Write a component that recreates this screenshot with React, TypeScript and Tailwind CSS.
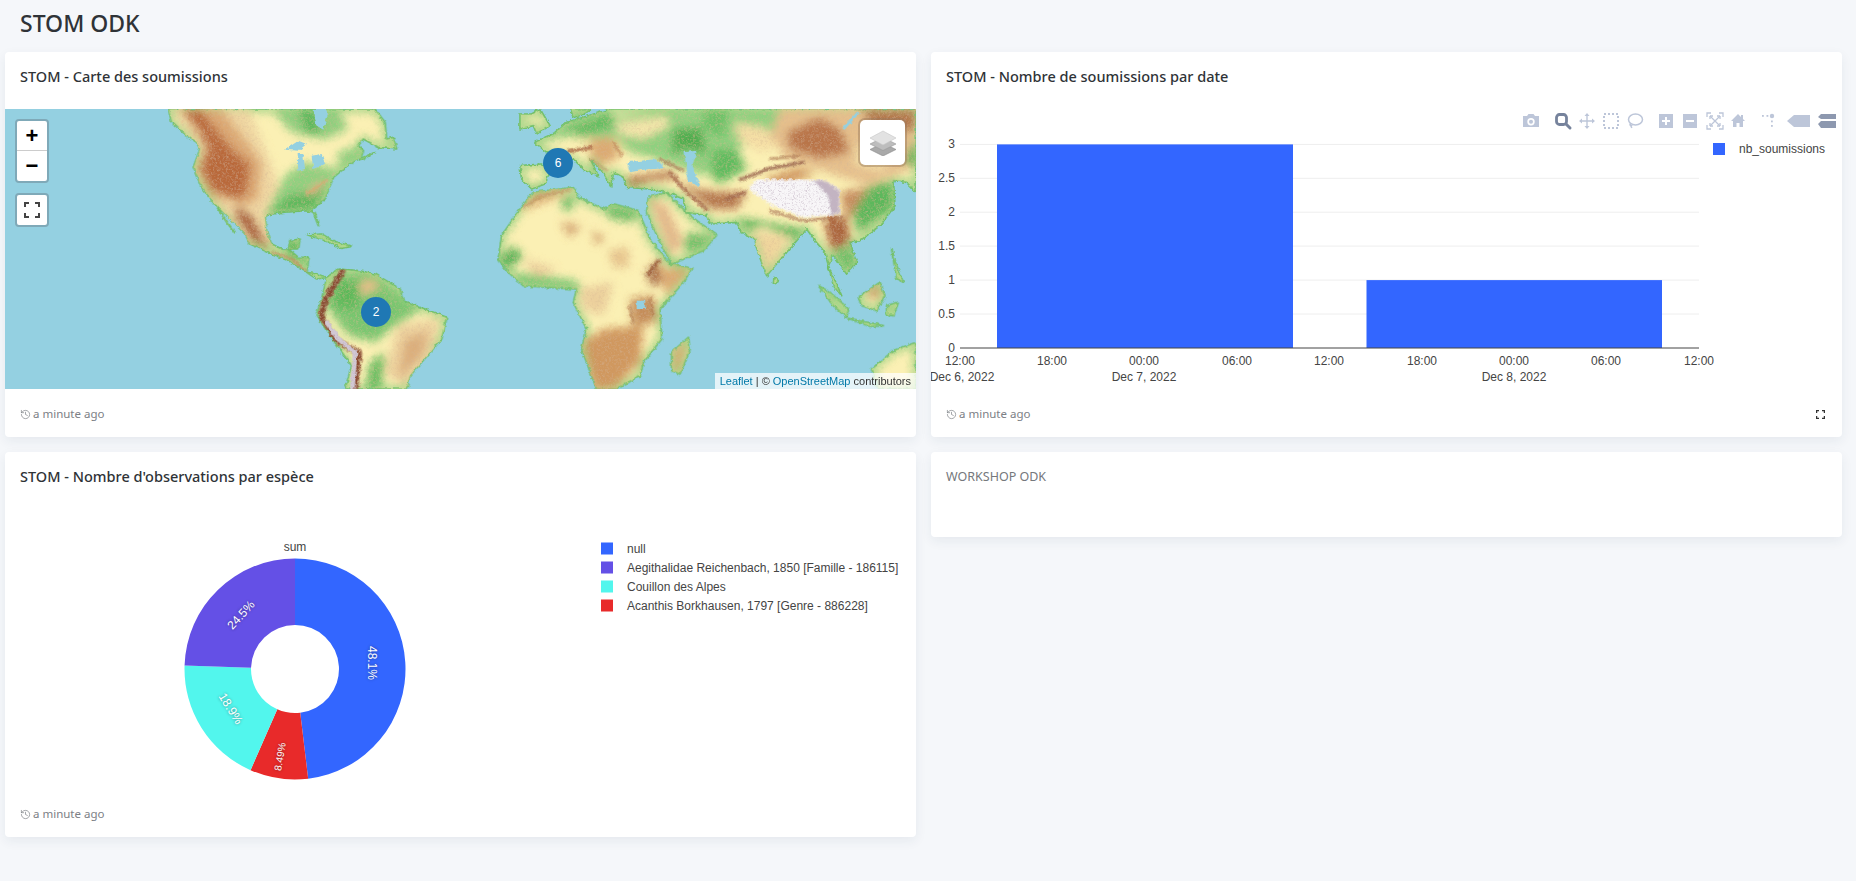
import { History } from "lucide-react"

const titleFont = "font-['Noto_Sans',sans-serif]"
const chartFont = "font-['Liberation_Sans',Arial,sans-serif]"

// land outlines, traced at 3x the map size. "e" = eastern half, shifted right
const land = [
  { d: "M490,0 L500,40 L545,80 L575,100 L585,120 L565,175 L590,235 L610,262 L640,300 L690,372 L665,340 L630,285 L720,375 L735,405 L800,435 L850,455 L905,490 L935,510 L965,505 L935,495 L905,490 L912,445 L880,445 L850,420 L855,395 L885,390 L880,420 L830,420 L800,405 L785,370 L780,320 L830,310 L900,305 L930,310 L940,350 L920,300 L960,270 L985,205 L1040,160 L1110,130 L1065,155 L1075,125 L1060,110 L1075,90 L1120,115 L1175,120 L1165,85 L1145,90 L1140,40 L1110,0 Z" },
  { d: "M965,505 L1000,480 L1060,485 L1110,495 L1185,540 L1195,575 L1260,600 L1325,625 L1310,690 L1275,730 L1215,800 L1205,840 L1020,840 L1040,770 L1000,715 L955,650 L935,615 L950,570 Z" },
  { d: "M905,378 L950,375 L990,398 L1040,412 L1010,418 L960,395 Z" },
  { e: true, d: "M150,300 L190,250 L310,235 L325,265 L400,300 L430,285 L505,305 L540,390 L600,465 L665,478 L640,520 L570,600 L575,690 L520,760 L510,800 L440,840 L380,840 L335,720 L350,660 L310,580 L320,540 L160,530 L115,490 L85,450 L95,380 Z" },
  { e: true, d: "M655,685 L660,720 L630,795 L605,785 L605,730 Z" },
  { e: true, d: "M535,265 L590,250 L660,320 L740,378 L700,425 L605,465 L570,400 L530,310 Z" },
  { e: true, d: "M150,170 L215,165 L240,190 L225,225 L185,240 L155,210 Z" },
  { e: true, d: "M195,100 L250,75 L290,40 L340,25 L420,0 L1338,0 L1338,250 L1310,220 L1270,215 L1275,290 L1230,350 L1170,395 L1140,400 L1160,460 L1130,495 L1090,440 L1075,470 L1115,560 L1090,530 L1065,430 L1035,395 L1010,360 L980,395 L915,470 L890,500 L860,420 L855,390 L815,370 L800,340 L720,345 L710,320 L650,310 L640,270 L590,250 L540,240 L470,235 L460,205 L430,190 L425,235 L400,190 L360,150 L385,200 L345,185 L310,150 L230,130 Z" },
  { e: true, d: "M150,15 L185,15 L210,0 L240,50 L200,75 L190,50 L150,60 Z" },
  { e: true, d: "M300,0 L310,25 L345,15 L360,0 Z" },
  { e: true, d: "M912,505 L925,515 L920,525 L910,520 Z" },
  { e: true, d: "M1045,530 L1080,550 L1135,600 L1130,625 L1090,590 Z" },
  { e: true, d: "M1165,565 L1230,520 L1245,560 L1220,605 L1175,590 Z" },
  { e: true, d: "M1135,628 L1240,650 L1200,652 Z" },
  { e: true, d: "M1250,590 L1285,580 L1270,620 L1250,615 Z" },
  { e: true, d: "M1265,420 L1280,470 L1300,520 L1280,510 Z" },
  { e: true, d: "M1338,700 L1270,725 L1205,780 L1225,840 L1338,840 Z" },
]

// elevation colour patches, blurred and clipped to the land
const westPatches: [string, string][] = [
  ["#8fcf7e", "M800,0 L1000,0 L1030,60 L960,90 L860,70 Z"],
  ["#5cb85c", "M880,0 L930,0 L950,70 L905,78 Z"],
  ["#8fd07f", "M780,320 L840,200 L900,160 L1000,180 L960,275 L900,305 Z"],
  ["#5cb85c", "M780,325 L850,260 L965,235 L930,300 L830,310 Z"],
  ["#8fd07f", "M1000,130 L1060,110 L1060,150 L1000,190 Z"],
  ["#f0d7a2", "M500,0 L730,0 L800,170 L820,240 L780,310 L800,400 L730,400 L640,290 L570,190 L585,120 Z"],
  ["#dca873", "M520,0 L650,0 L720,90 L770,160 L760,270 L720,290 L620,260 L575,180 L600,120 L570,60 Z"],
  ["#b9693b", "M530,0 L585,0 L640,70 L690,130 L735,165 L725,250 L700,270 L620,245 L585,180 L610,120 L580,60 Z"],
  ["#a85a34", "M695,290 L740,320 L795,420 L740,395 L690,320 Z"],
  ["#e3b98a", "M890,260 L960,205 L940,250 Z"],
  ["#6abd62", "M830,395 L885,390 L910,470 L850,445 Z"],
  ["#79c670", "M990,495 L1100,495 L1190,560 L1250,600 L1170,650 L1110,700 L1030,680 L960,590 Z"],
  ["#5db95a", "M1000,510 L1060,520 L1060,600 L980,590 Z"],
  ["#eac08a", "M1060,520 L1110,510 L1120,540 L1070,560 Z"],
  ["#ecd09c", "M1180,650 L1300,630 L1280,730 L1200,830 L1140,790 Z"],
  ["#dcae7c", "M1200,690 L1270,670 L1250,740 L1180,810 Z"],
  ["#68bd60", "M1095,760 L1140,730 L1130,840 L1080,840 Z"],
]

const eastPatches: [string, string][] = [
  ["#8fd07f", "M230,95 L300,45 L620,0 L930,0 L960,60 L800,120 L700,200 L560,150 L400,110 L300,80 Z"],
  ["#5fbc5f", "M280,60 L420,10 L440,50 L340,80 Z"],
  ["#f4e6aa", "M430,45 L590,20 L600,50 L520,90 L450,75 Z"],
  ["#e9e29f", "M300,85 L440,85 L480,130 L360,110 Z"],
  ["#4fae50", "M610,60 L695,55 L710,135 L640,120 L605,140 Z"],
  ["#6cc268", "M700,0 L780,0 L760,90 L700,60 Z"],
  ["#f5dfa5", "M790,40 L880,55 L940,100 L880,130 L810,100 Z"],
  ["#5fbc5f", "M730,120 L800,120 L830,180 L750,225 L720,200 Z"],
  ["#e6c08c", "M930,0 L1338,0 L1338,170 L1200,230 L1100,200 L950,150 L900,80 Z"],
  ["#b9744a", "M950,70 L1050,25 L1110,60 L1140,130 L1050,150 L960,120 Z"],
  ["#b5784d", "M1170,0 L1338,0 L1338,60 L1230,85 Z"],
  ["#f1dba3", "M1160,100 L1280,130 L1240,190 L1150,170 Z"],
  ["#d29a62", "M880,210 L980,175 L1040,190 L930,240 Z"],
  ["#b5774e", "M470,205 L600,185 L650,240 L720,300 L800,300 L830,250 L760,250 L680,240 L620,210 L540,215 L480,235 Z"],
  ["#c78d5e", "M1110,250 L1220,230 L1180,300 L1130,330 Z"],
  ["#5cb85c", "M1200,230 L1262,215 L1272,290 L1200,350 L1160,375 L1150,310 Z"],
  ["#a9623b", "M1060,335 L1130,320 L1140,400 L1085,425 Z"],
  ["#59b558", "M805,325 L1000,360 L975,390 L880,350 L830,365 Z"],
  ["#f0d59c", "M850,365 L960,385 L890,490 Z"],
  ["#6fc068", "M1090,420 L1150,410 L1160,460 L1130,495 Z"],
  ["#dcaa72", "M360,90 L430,85 L450,140 L400,170 L360,140 Z"],
  ["#e3b98a", "M535,265 L590,290 L640,400 L605,440 L560,330 Z"],
  ["#6fc068", "M650,370 L730,380 L690,420 L640,430 Z"],
  ["#dba970", "M150,300 L200,255 L310,240 L260,265 L170,300 Z"],
  ["#6fc068", "M275,262 L315,265 L305,305 L275,300 Z"],
  ["#d6a672", "M270,340 L335,350 L300,385 Z"],
  ["#d6a672", "M365,365 L405,385 L380,410 Z"],
  ["#e8c68e", "M415,425 L475,415 L475,475 L430,475 Z"],
  ["#ecd09c", "M160,450 L260,480 L200,510 Z"],
  ["#ecd09c", "M330,540 L430,520 L400,620 L340,600 Z"],
  ["#57b356", "M85,450 L130,410 L160,440 L120,480 Z"],
  ["#7cc873", "M130,490 L320,515 L330,540 L160,530 Z"],
  ["#6fc068", "M400,290 L505,305 L490,340 L420,330 Z"],
  ["#a0603c", "M530,490 L570,450 L575,520 L545,530 Z"],
  ["#dba970", "M560,480 L660,480 L590,560 Z"],
  ["#c48c58", "M480,570 L550,560 L560,640 L490,650 Z"],
  ["#d0985f", "M340,700 L400,660 L520,650 L510,760 L430,840 L370,840 Z"],
  ["#62b95e", "M520,770 L575,690 L540,740 L510,800 Z"],
  ["#d9a76e", "M615,720 L650,700 L625,790 L610,780 Z"],
  ["#4fae50", "M1338,90 L1300,160 L1338,170 Z"],
  ["#cf9c68", "M1190,540 L1240,530 L1210,580 Z"],
]

// thin ridge lines, drawn with much less blur
const westRidges: [string, number, string][] = [
  ["M1012,488 L962,570 L948,620 L990,692 L1062,732 L1050,840", 18, "#8a4a32"],
  ["M805,430 L860,450 L905,490", 7, "#c08a5c"],
  ["M905,255 L965,215", 7, "#dba970"],
]

const eastRidges: [string, number, string][] = [
  ["M810,212 L900,178 L1000,160", 9, "#99634c"],
  ["M900,150 L990,140", 5, "#a36a48"],
  ["M600,190 L640,240 L710,300", 9, "#a5684a"],
  ["M570,150 L640,185", 6, "#a5684a"],
  ["M295,128 L365,115", 9, "#a86440"],
  ["M430,100 L455,140", 5, "#b9744a"],
  ["M360,148 L410,185", 4, "#c08a5c"],
  ["M770,270 L825,250", 9, "#a0644a"],
  ["M900,305 L1000,335 L1115,325", 6, "#a0644a"],
  ["M1085,325 L1105,395", 18, "#ae6a42"],
  ["M160,295 L210,262 L300,242", 5, "#c08a5c"],
  ["M535,495 L565,455", 10, "#9c5e3c"],
  ["M480,590 L490,640", 5, "#a86c44"],
  ["M540,570 L550,620", 5, "#a86c44"],
]

function MapArt() {
  return (
    <svg viewBox="0 0 2733 840" className="block h-full w-full" aria-hidden="true">
      <defs>
        <filter id="rough" x="0" y="0" width="100%" height="100%">
          <feTurbulence type="fractalNoise" baseFrequency="0.08" numOctaves="5" seed="7" />
          <feDisplacementMap in="SourceGraphic" scale="12" xChannelSelector="R" yChannelSelector="G" />
        </filter>
        <filter id="soft" x="-20%" y="-20%" width="140%" height="140%">
          <feGaussianBlur stdDeviation="13" />
        </filter>
        <filter id="ridge" x="-30%" y="-30%" width="160%" height="160%">
          <feGaussianBlur stdDeviation="3.500" />
        </filter>
        <filter id="mottle" x="0" y="0" width="100%" height="100%">
          <feTurbulence type="fractalNoise" baseFrequency="0.16" numOctaves="4" seed="3" result="n" />
          <feColorMatrix in="n" type="matrix" values="0 0 0 0 .66  0 0 0 0 .47  0 0 0 0 .3  1.100 0 0 0 -.5" result="tint" />
          <feComposite in="tint" in2="SourceAlpha" operator="in" result="t2" />
          <feMerge>
            <feMergeNode in="SourceGraphic" />
            <feMergeNode in="t2" />
          </feMerge>
        </filter>
        <filter id="snow" x="0" y="0" width="100%" height="100%">
          <feTurbulence type="fractalNoise" baseFrequency="0.28" numOctaves="3" seed="11" result="n" />
          <feColorMatrix in="n" type="matrix" values="0 0 0 0 .55  0 0 0 0 .45  0 0 0 0 .55  2.200 0 0 0 -1.100" result="tint" />
          <feComposite in="tint" in2="SourceAlpha" operator="in" result="t2" />
          <feMerge>
            <feMergeNode in="SourceGraphic" />
            <feMergeNode in="t2" />
          </feMerge>
        </filter>
        <clipPath id="landClip">
          {land.map((l, i) => (
            <path key={i} d={l.d} transform={l.e ? "translate(1395 0)" : undefined} />
          ))}
        </clipPath>
      </defs>
      <rect width="2733" height="840" fill="#94d0e1" />
      <g filter="url(#rough)">
        {land.map((l, i) => (
          <path key={i} d={l.d} transform={l.e ? "translate(1395 0)" : undefined} fill="#fbf0b4" stroke="#70bf68" strokeWidth="5" strokeLinejoin="round" />
        ))}
        <g clipPath="url(#landClip)">
          <g filter="url(#mottle)">
            {/* green fade along the coasts */}
            <g filter="url(#soft)">
              {land.map((l, i) => (
                <path key={i} d={l.d} transform={l.e ? "translate(1395 0)" : undefined} fill="none" stroke="#86cc78" strokeWidth="16" />
              ))}
              {westPatches.map(([c, d], i) => (
                <path key={i} d={d} fill={c} />
              ))}
              <g transform="translate(1395 0)">
                {eastPatches.map(([c, d], i) => (
                  <path key={i} d={d} fill={c} />
                ))}
              </g>
            </g>
            <g filter="url(#ridge)" fill="none" strokeLinecap="round" strokeLinejoin="round">
              {westRidges.map(([d, w, c], i) => (
                <path key={i} d={d} stroke={c} strokeWidth={w} />
              ))}
              <g transform="translate(1395 0)">
                {eastRidges.map(([d, w, c], i) => (
                  <path key={i} d={d} stroke={c} strokeWidth={w} />
                ))}
              </g>
            </g>
          </g>
          {/* high ground: Andes and Tibet */}
          <g filter="url(#snow)">
            <path d="M962,635 L1000,690 L1050,730 L1042,840" fill="none" stroke="#d2c8d4" strokeWidth="14" strokeLinejoin="round" />
            <g transform="translate(1395 0)" filter="url(#ridge)">
              <path d="M835,238 L862,210 L1060,212 L1110,242 L1110,316 L1000,326 L905,288 Z" fill="#f8f6f8" />
              <path d="M1030,214 L1062,214 L1108,244 L1108,314 L1085,316 L1075,262 Z" fill="#c3b4c2" />
            </g>
          </g>
        </g>
        {/* lakes and inland seas */}
        <g fill="#94d0e1">
          <path d="M925,0 L935,50 L955,62 L970,10 L965,0 Z" />
          <path d="M840,122 L880,95 L905,105 L880,125 Z" />
          <path d="M878,135 L895,135 L900,180 L880,185 Z" />
          <path d="M920,140 L950,135 L960,165 L925,180 Z" />
          <g transform="translate(1395 0)">
            <path d="M470,160 L560,150 L585,178 L520,182 L480,190 Z" />
            <path d="M640,130 L680,125 L668,170 L690,235 L652,215 L650,170 Z" />
            <path d="M500,575 L525,575 L525,600 L500,600 Z" />
            <path d="M1120,60 L1165,10" fill="none" stroke="#94d0e1" strokeWidth="8" />
          </g>
        </g>
      </g>
    </svg>
  )
}

function LeafletMap() {
  return (
    <div className="relative h-[280px] overflow-hidden bg-[#94d0e1]">
      <MapArt />
      <div className="absolute left-[10px] top-[10px] w-[34px] rounded-[4px] border-2 border-[#7fa9b8] bg-white">
        <div className="flex h-[30px] items-center justify-center border-b border-[#ccc] font-['Liberation_Sans',sans-serif] text-[22px] font-bold leading-none text-black">+</div>
        <div className="flex h-[30px] items-center justify-center font-['Liberation_Sans',sans-serif] text-[22px] font-bold leading-none text-black">−</div>
      </div>
      <div className="absolute left-[10px] top-[84px] flex h-[34px] w-[34px] items-center justify-center rounded-[4px] border-2 border-[#7fa9b8] bg-white">
        <svg width="16" height="16" viewBox="0 0 16 16" fill="none" stroke="#444" strokeWidth="2">
          <path d="M1 5V1h4M11 1h4v4M15 11v4h-4M5 15H1v-4" />
        </svg>
      </div>
      <div className="absolute left-[855px] top-[11px] flex h-[45px] w-[45px] items-center justify-center rounded-[5px] bg-white shadow-[0_0_0_2px_rgba(150,120,90,0.45)]">
        <svg width="26" height="26" viewBox="0 0 26 26">
          <path d="M13 13 26 19.5 13 26 0 19.5Z" fill="#a9a9a9" stroke="#8c8c8c" strokeWidth=".6" />
          <path d="M13 7.5 26 14 13 20.5 0 14Z" fill="#bdbdbd" stroke="#999" strokeWidth=".6" />
          <path d="M13 1 26 8 13 15 0 8Z" fill="#e2e2e2" stroke="#c6c6c6" strokeWidth=".6" />
        </svg>
      </div>
      <Cluster x={376} y={312 - 109} label="2" />
      <Cluster x={558} y={163 - 109} label="6" />
      <div className="absolute bottom-0 right-0 flex h-4 items-center bg-white/75 px-[5px] font-['Liberation_Sans',sans-serif] text-[11px] leading-none text-[#333]">
        <span className="text-[#0078a8]">Leaflet</span>
        <span>&nbsp;|&nbsp;©&nbsp;</span>
        <span className="text-[#0078a8]">OpenStreetMap</span>
        <span>&nbsp;contributors</span>
      </div>
    </div>
  )
}

function Cluster({ x, y, label }: { x: number; y: number; label: string }) {
  return (
    <div
      className="absolute flex h-[30px] w-[30px] -translate-x-1/2 -translate-y-1/2 items-center justify-center rounded-full bg-[#1f78b4] font-['Liberation_Sans',sans-serif] text-[12px] text-white"
      style={{ left: x - 5, top: y }}
    >
      {label}
    </div>
  )
}

const yTicks = [
  { label: "3", y: 35.4 },
  { label: "2.5", y: 69.3 },
  { label: "2", y: 103.2 },
  { label: "1.5", y: 137.1 },
  { label: "1", y: 171.1 },
  { label: "0.5", y: 205 },
  { label: "0", y: 239 },
]
const xTicks = [
  { x: 29, label: "12:00" },
  { x: 121, label: "18:00" },
  { x: 213, label: "00:00" },
  { x: 306, label: "06:00" },
  { x: 398, label: "12:00" },
  { x: 491, label: "18:00" },
  { x: 583, label: "00:00" },
  { x: 675, label: "06:00" },
  { x: 768, label: "12:00" },
]

function ModeBar() {
  const c = "#bdc6d9"
  const dark = "#8d98af"
  return (
    <g>
      {/* camera */}
      <g transform="translate(592 4)" fill={c}>
        <path fillRule="evenodd" d="M0 3h4l1.500-2h5L12 3h4v11H0ZM8 5a3.700 3.700 0 1 0 0 7.400A3.700 3.700 0 0 0 8 5Z" />
        <circle cx="8" cy="8.700" r="2" />
      </g>
      {/* zoom */}
      <g transform="translate(624 4)" fill="none" stroke="#76839c">
        <rect x="1.500" y="1.500" width="10" height="10" rx="3" strokeWidth="2.800" />
        <path d="M11 11l4 4" strokeWidth="3" strokeLinecap="round" />
      </g>
      {/* pan */}
      <g transform="translate(648 4)" stroke={c} fill={c} strokeWidth="1.400">
        <path d="M8 1v14M1 8h14" />
        <path d="M8 0l2.500 3h-5ZM8 16l2.500-3h-5ZM0 8l3-2.500v5ZM16 8l-3-2.500v5Z" stroke="none" />
      </g>
      {/* box select */}
      <rect x="673" y="5" width="14" height="14" fill="none" stroke={c} strokeWidth="2" strokeDasharray="2 2" />
      {/* lasso */}
      <g transform="translate(696 4)" fill="none" stroke={c} strokeWidth="1.500">
        <ellipse cx="8.500" cy="6.500" rx="7" ry="5.500" />
        <path d="M3.500 10.500c-1.500 2 1 3 1.500 1.500M3.800 11.500c.2 1.500.5 2.500 1 3.500" />
      </g>
      {/* zoom in and out */}
      <g fill={c}>
        <path fillRule="evenodd" d="M728 5h14v14h-14ZM734 8v3h-3v2h3v3h2v-3h3v-2h-3V8Z" />
        <path fillRule="evenodd" d="M752 5h14v14h-14ZM755 11v2h8v-2Z" />
      </g>
      {/* autoscale */}
      <g transform="translate(776 4)" fill="none" stroke={c} strokeWidth="1.300">
        <path d="M0 4V0h4M12 0h4v4M16 12v4h-4M4 16H0v-4" />
        <path d="M3 3l10 10M13 3L3 13" />
        <path d="M3 3h3M3 3v3M13 3h-3M13 3v3M3 13h3M3 13v-3M13 13h-3M13 13v-3" />
      </g>
      {/* home */}
      <path d="M800 12l7-7 3 3V6h2v4l2 2h-2v6h-3.500v-4h-3v4H802v-6Z" fill={c} />
      {/* spikes */}
      <g fill={c}>
        <circle cx="841" cy="7" r="2.200" />
        <rect x="831" y="6" width="1.800" height="1.800" />
        <rect x="835.500" y="6" width="1.800" height="1.800" />
        <rect x="840" y="11.500" width="1.800" height="1.800" />
        <rect x="840" y="16" width="1.800" height="1.800" />
      </g>
      {/* hover modes */}
      <path d="M856 12l7-6h16v12h-16Z" fill={c} />
      <path d="M887 8l3-3h15v5h-15ZM887 15l3-3h15v7h-15Z" fill={dark} />
    </g>
  )
}

function BarChart() {
  return (
    <svg viewBox="0 0 911 280" className={`block h-[280px] w-full ${chartFont}`}>
      <ModeBar />
      {yTicks.slice(0, 6).map((t) => (
        <line key={t.label} x1="29" x2="768" y1={t.y} y2={t.y} stroke="#eeeeee" />
      ))}
      <rect x="66" y="35.400" width="296" height="203.600" fill="#3366ff" />
      <rect x="435.500" y="171.100" width="295.500" height="67.900" fill="#3366ff" />
      <line x1="29" x2="768" y1="239" y2="239" stroke="#444444" />
      {yTicks.map((t) => (
        <text key={t.label} x="24" y={t.y + 4} textAnchor="end" fontSize="12" fill="#444">
          {t.label}
        </text>
      ))}
      {xTicks.map((t, i) => (
        <text key={i} x={t.x} y="256" textAnchor="middle" fontSize="12" fill="#444">
          {t.label}
        </text>
      ))}
      <text x="31" y="272" textAnchor="middle" fontSize="12" fill="#444">Dec 6, 2022</text>
      <text x="213" y="272" textAnchor="middle" fontSize="12" fill="#444">Dec 7, 2022</text>
      <text x="583" y="272" textAnchor="middle" fontSize="12" fill="#444">Dec 8, 2022</text>
      <rect x="782" y="34" width="12" height="12" fill="#3366ff" />
      <text x="808" y="44" fontSize="12" fill="#444">nb_soumissions</text>
    </svg>
  )
}

const slices = [
  { pct: 48.1, color: "#3366ff" },
  { pct: 8.49, color: "#e82a2a" },
  { pct: 18.9, color: "#52f6ed" },
  { pct: 24.51, color: "#6450e6" },
]

const pieLabels = [
  { text: "48.1%", x: 366.7, y: 154, rot: 90, size: 12 },
  { text: "8.49%", x: 275, y: 247.700, rot: -80, size: 10 },
  { text: "18.9%", x: 225.700, y: 199.700, rot: 58, size: 12 },
  { text: "24.5%", x: 236, y: 106, rot: -48, size: 12 },
]

const pieLegend = [
  { label: "null", color: "#3366ff", y: 39.500 },
  { label: "Aegithalidae Reichenbach, 1850 [Famille - 186115]", color: "#6450e6", y: 58.500 },
  { label: "Couillon des Alpes", color: "#52f6ed", y: 77.500 },
  { label: "Acanthis Borkhausen, 1797 [Genre - 886228]", color: "#e82a2a", y: 96.500 },
]

function slicePath(from: number, to: number) {
  const cx = 290
  const cy = 160
  const R = 110.500
  const r = 44
  const a0 = (from / 100) * 2 * Math.PI
  const a1 = (to / 100) * 2 * Math.PI
  const pt = (rad: number, a: number) => `${cx + rad * Math.sin(a)},${cy - rad * Math.cos(a)}`
  const large = to - from > 50 ? 1 : 0
  return `M${pt(R, a0)} A${R},${R} 0 ${large} 1 ${pt(R, a1)} L${pt(r, a1)} A${r},${r} 0 ${large} 0 ${pt(r, a0)} Z`
}

function PieChart() {
  let acc = 0
  return (
    <svg viewBox="0 0 911 280" className={`block h-[280px] w-full ${chartFont}`}>
      <text x="290" y="42" textAnchor="middle" fontSize="12" fill="#444">sum</text>
      {slices.map((s) => {
        const d = slicePath(acc, acc + s.pct)
        acc += s.pct
        return <path key={s.color} d={d} fill={s.color} />
      })}
      {pieLabels.map((l) => (
        <text
          key={l.text}
          x={l.x}
          y={l.y}
          fontSize={l.size}
          fill="#fff"
          textAnchor="middle"
          dominantBaseline="central"
          transform={`rotate(${l.rot} ${l.x} ${l.y})`}
          className="[text-shadow:0_0_3px_rgba(0,0,0,0.45)]"
        >
          {l.text}
        </text>
      ))}
      {pieLegend.map((l) => (
        <g key={l.label}>
          <rect x="596" y={l.y - 6} width="12" height="12" fill={l.color} />
          <text x="622" y={l.y + 4} fontSize="12" fill="#444">{l.label}</text>
        </g>
      ))}
    </svg>
  )
}

function Card({ title, children, expand }: { title: string; children: React.ReactNode; expand?: boolean }) {
  return (
    <div className="overflow-hidden rounded-[4px] bg-white shadow-[0_4px_12px_rgba(30,50,80,0.07)]">
      <div className={`h-[57px] px-[15px] pt-[14px] text-[14.5px] font-medium leading-5 text-[#2f3337] ${titleFont}`}>{title}</div>
      {children}
      <div className={`flex h-[48px] items-center justify-between px-[15px] pt-[2px] text-[11.5px] text-[#7c8085] ${titleFont}`}>
        <span className="flex items-center gap-[2px]">
          <History size={11} strokeWidth={1.500} />
          a minute ago
        </span>
        {expand && (
          <svg width="9" height="9" viewBox="0 0 9 9" fill="none" stroke="#333" strokeWidth="1.300" className="mr-[2px]">
            <path d="M.6 3V.6H3M6 .6h2.400V3M8.400 6v2.400H6M3 8.400H.6V6" />
          </svg>
        )}
      </div>
    </div>
  )
}

export default function App() {
  return (
    <div className="min-h-screen bg-[#f5f7fa]">
      <div className={`flex h-[52px] items-center pb-[5px] pl-5 text-[23px] font-medium leading-none text-[#2f3337] ${titleFont}`}>STOM ODK</div>
      <div className="grid grid-cols-[911px_911px] items-start gap-[15px] pl-[5px]">
        <Card title="STOM - Carte des soumissions">
          <LeafletMap />
        </Card>
        <Card title="STOM - Nombre de soumissions par date" expand>
          <BarChart />
        </Card>
        <Card title="STOM - Nombre d'observations par espèce">
          <PieChart />
        </Card>
        <div className="h-[85px] rounded-[4px] bg-white shadow-[0_4px_12px_rgba(30,50,80,0.07)]">
          <div className={`px-[15px] pt-[15px] text-[12.5px] leading-5 text-[#75787c] ${titleFont}`}>WORKSHOP ODK</div>
        </div>
      </div>
    </div>
  )
}
